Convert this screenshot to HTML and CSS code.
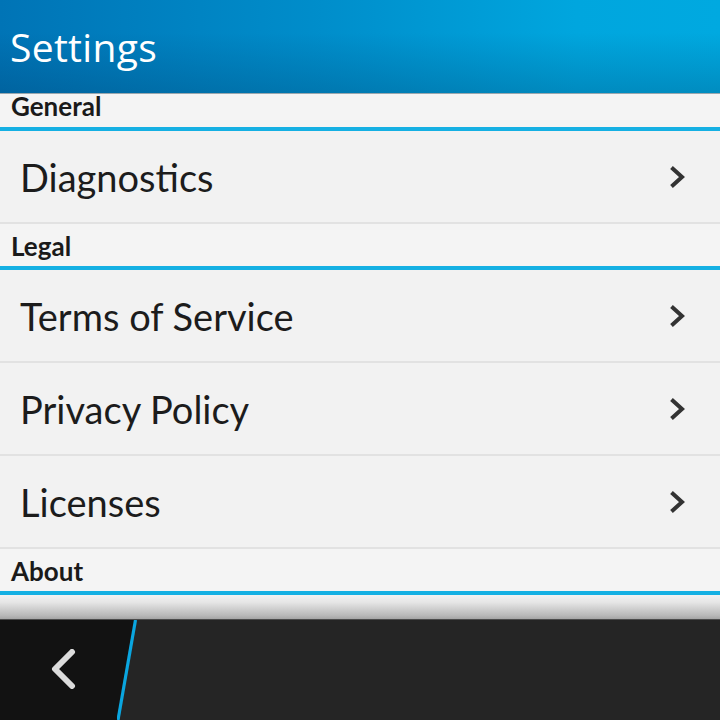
FILE: index.html
```html
<!DOCTYPE html>
<html>
<head>
<meta charset="utf-8">
<link rel="stylesheet" href="styles.css">
</head>
<body>
<div class="screen">
  <header class="titlebar"><h1 class="title">Settings</h1></header>
  <main class="list">
    <div class="section section-first">General</div>
    <div class="row"><span class="label">Diagnostics</span>
      <svg class="chev" viewBox="0 0 16 24"><path d="M2.5 2.5 L13 12 L2.5 21.5" /></svg></div>
    <div class="section">Legal</div>
    <div class="row"><span class="label">Terms of Service</span>
      <svg class="chev" viewBox="0 0 16 24"><path d="M2.5 2.5 L13 12 L2.5 21.5" /></svg></div>
    <div class="sep"></div>
    <div class="row"><span class="label">Privacy Policy</span>
      <svg class="chev" viewBox="0 0 16 24"><path d="M2.5 2.5 L13 12 L2.5 21.5" /></svg></div>
    <div class="sep"></div>
    <div class="row"><span class="label">Licenses</span>
      <svg class="chev" viewBox="0 0 16 24"><path d="M2.5 2.5 L13 12 L2.5 21.5" /></svg></div>
    <div class="section">About</div>
    <div class="shade"></div>
  </main>
  <footer class="actionbar">
    <div class="back">
      <svg class="back-icon" viewBox="0 0 26 40"><path d="M22 3 L5 20 L22 37" /></svg>
    </div>
    <svg class="slash" viewBox="0 0 30 101" preserveAspectRatio="none"><polygon points="0,0 30,0 30,101 0,101" fill="#252525"/><polygon points="0,0 18,0 0,101" fill="#121212"/><line x1="18.5" y1="0" x2="1" y2="101" stroke="#0aa6e0" stroke-width="3.2"/></svg>
    <div class="rest"></div>
  </footer>
</div>
</body>
</html>
```
FILE: styles.css
```css
html, body {
  margin: 0;
  padding: 0;
  background: #f2f2f2;
}
.screen {
  width: 720px;
  height: 720px;
  display: flex;
  flex-direction: column;
  overflow: hidden;
  font-family: Lato, "Open Sans", sans-serif;
}
.titlebar {
  height: 93px;
  flex: none;
  background:
    linear-gradient(to bottom, rgba(0,0,0,0) 0%, rgba(0,0,0,0) 35%, rgba(0,40,80,0.22) 100%),
    linear-gradient(to right, #0074b6 0%, #008ecb 45%, #00a6de 80%, #00a9e0 100%);
  border-bottom: 1px solid #9aa7ae;
  display: flex;
  align-items: flex-end;
}
.title {
  margin: 0 0 27px 10px;
  font-family: "Open Sans", Lato, sans-serif;
  font-weight: 400;
  font-size: 39px;
  line-height: 39px;
  color: #ffffff;
  letter-spacing: 0.3px;
}
.list {
  flex: 1;
  display: flex;
  flex-direction: column;
  background: #f2f2f2;
}
.section {
  height: 48px;
  box-sizing: border-box;
  padding: 9px 0 0 11px;
  background: #f4f4f4;
  border-top: 2px solid #e2e2e2;
  border-bottom: 4px solid #15b0e3;
  font-weight: 700;
  font-size: 26px;
  line-height: 26px;
  color: #1a1a1a;
  flex: none;
}
.section-first {
  height: 37px;
  border-top: none;
  padding-top: 0;
  line-height: 24px;
}
.row {
  height: 91px;
  flex: none;
  display: flex;
  align-items: center;
  justify-content: space-between;
  padding: 0 35px 0 20px;
  background: #f2f2f2;
}
.label {
  font-size: 38px;
  color: #1c1c1c;
}
.chev {
  width: 16px;
  height: 24px;
}
.chev path {
  fill: none;
  stroke: #333333;
  stroke-width: 4;
  stroke-linecap: butt;
  stroke-linejoin: miter;
}
.sep {
  height: 2px;
  background: #e2e2e2;
  flex: none;
}
.shade {
  flex: 1;
  background: linear-gradient(to bottom, #f2f2f2 0%, #e6e6e6 30%, #b8b8b8 85%, #a5a5a5 100%);
}
.actionbar {
  height: 101px;
  flex: none;
  display: flex;
  background: #252525;
  border-top: 1px solid #4a4a4a;
  box-sizing: border-box;
}
.back {
  width: 117px;
  background: #121212;
  display: flex;
  align-items: center;
  justify-content: flex-start;
  padding-left: 50px;
  box-sizing: border-box;
}
.back-icon {
  width: 26px;
  height: 40px;
  margin-top: -2px;
}
.back-icon path {
  fill: none;
  stroke: #dcdcdc;
  stroke-width: 6;
  stroke-linecap: round;
  stroke-linejoin: round;
}
.slash {
  width: 30px;
  height: 100%;
  display: block;
  flex: none;
}
.rest {
  flex: 1;
}
```
